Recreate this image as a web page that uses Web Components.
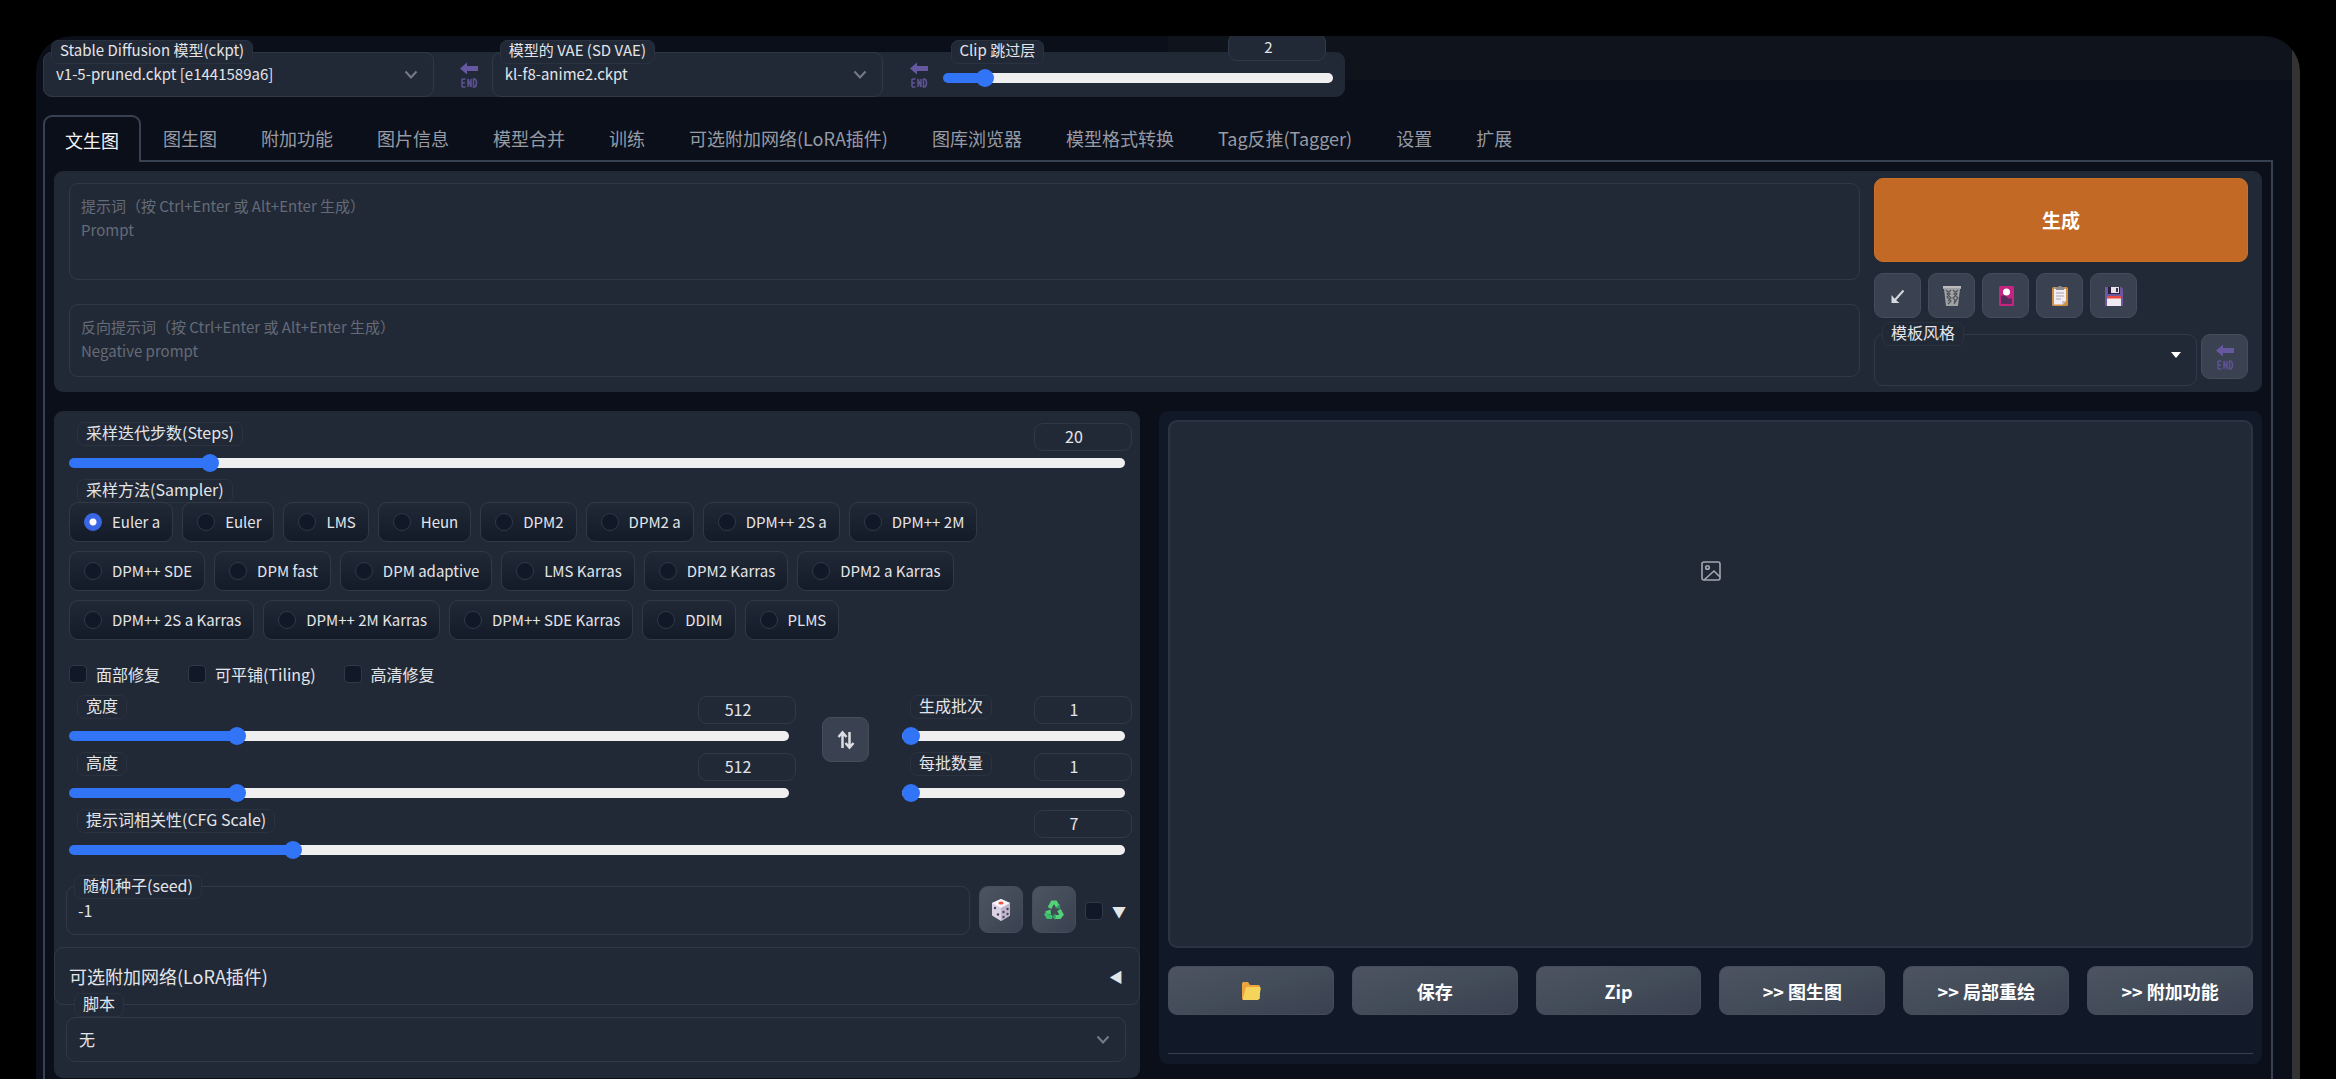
<!DOCTYPE html>
<html lang="zh-CN">
<head>
<meta charset="utf-8">
<title>Stable Diffusion</title>
<style>
body {
    margin: 0;
    background: #000;
    color: #e3e5e9;
    font: 16px/24px "Noto Sans CJK SC", "Noto Sans", sans-serif;
    --window: #0b0f19;
    --panel: #222936;
    --dark: #111827;
    --line: #313947;
    --frame: #374151;
    --blue: #3274f6;
}
</style>
</head>
<body>
<sd-window>
    <sd-quickbar>
        <sd-select label="Stable Diffusion 模型(ckpt)" value="v1-5-pruned.ckpt [e1441589a6]"></sd-select>
        <sd-button kind="bare" icon="end" title="应用"></sd-button>
        <sd-select label="模型的 VAE (SD VAE)" value="kl-f8-anime2.ckpt"></sd-select>
        <sd-button kind="bare" icon="end" title="应用"></sd-button>
        <sd-slider compact label="Clip 跳过层" min="1" max="12" value="2"></sd-slider>
    </sd-quickbar>

    <sd-tabs items="文生图,图生图,附加功能,图片信息,模型合并,训练,可选附加网络(LoRA插件),图库浏览器,模型格式转换,Tag反推(Tagger),设置,扩展">
        <sd-prompt-panel></sd-prompt-panel>
        <sd-columns>
            <sd-settings></sd-settings>
            <sd-output></sd-output>
        </sd-columns>
    </sd-tabs>
</sd-window>

<script>
const ICONS = {
    end: `<svg width="20" height="30" viewBox="0 0 20 30" fill="none"><path d="M1 8.500 8 2.500v3.500h11v5H8v3.500z" fill="#6558a0"/><path d="M3 19v8m0-8h3.500M3 23h3m-3 4h3.500M9 27v-8l3 8v-8M14.500 19v8h1q2-.500 2-4t-2-4z" stroke="#5c5192" stroke-width="1.600"/></svg>`,
    paste: `<svg width="20" height="20" viewBox="0 0 20 20" fill="none" stroke="#d5d8dc" stroke-width="2"><path d="m15.500 4.500-9 10"/><path d="M3.500 9v8h8l-3-2.500L6 12z" fill="#d5d8dc" stroke="none"/></svg>`,
    trash: `<svg width="20" height="20" viewBox="0 0 20 20"><path d="M1 0h18v3h-1l-2 17H4L2 3H1z" fill="#a0a1a3"/><path d="m4 4 4 4-3 3 4 4-3 3m3-14L5 8l4 4-3 3m5-11 4 4-4 4 3 3-2 3m4-14-4 4 4 4-4 4" stroke="#50545b" stroke-width="1.200" fill="none"/><path d="M1 1h18" stroke="#bbb" stroke-width="2"/></svg>`,
    card: `<svg width="20" height="20" viewBox="0 0 20 20"><rect x="3" width="15" height="20" rx="1.500" fill="#c72482"/><path d="M5 10q4-2 6 1t5 1v6H5z" fill="#542f5e"/><circle cx="10.500" cy="6" r="3.500" fill="#fff"/></svg>`,
    clipboard: `<svg width="20" height="20" viewBox="0 0 20 20"><rect x="2" y="1" width="16" height="19" rx="1.500" fill="#cf8f45"/><path d="M4 3h12v12l-3.500 3.500H4z" fill="#f2edf3"/><path d="M12 18.500V15h4z" fill="#c9c2d2"/><path d="M6 1h2.500a1.500 1.500 0 0 1 3 0H14v3H6z" fill="#8c8c91"/><path d="M6 7h8M6 10h8M6 13h5" stroke="#aaa3b2" stroke-width="1.200"/></svg>`,
    save: `<svg width="20" height="20" viewBox="0 0 20 20"><path d="M1 1h16l2 2v17H1z" fill="#6d579f"/><path d="M4 1h12v7H4z" fill="#29203c"/><path d="M7 1h8v6H7z" fill="#e7e2ea"/><path d="M12 2h2v4h-2z" fill="#3b3150"/><path d="M3 11h14v9H3z" fill="#efeaf0"/><path d="M3 10h14v2.500H3z" fill="#e6493f"/></svg>`,
    swap: `<svg width="18" height="20" viewBox="0 0 18 20" fill="none" stroke="#dcdee2" stroke-width="2.500"><path d="M5.500 18V4M1.500 7l4-4.500 4 4.500M12.500 2v14m-4-3 4 4.500 4-4.500"/></svg>`,
    dice: `<svg width="20" height="22" viewBox="0 0 20 22"><path d="m10 0 9 4v12.500L10 22 1 16.500V4z" fill="#d9d2e2"/><path d="m10 0 9 4-9 5-9-5z" fill="#f7f3f8"/><path d="m10 9 9-5v12.500L10 22z" fill="#c0b6cc"/><ellipse cx="10" cy="4" rx="2.600" ry="1.500" fill="#ee5548"/><g fill="#4e4066"><circle cx="4" cy="9" r="1.200"/><circle cx="7" cy="15.500" r="1.200"/><circle cx="12.500" cy="18" r="1.200"/><circle cx="12.500" cy="13" r="1.200"/><circle cx="16.500" cy="10" r="1.200"/><circle cx="16.500" cy="15" r="1.200"/></g></svg>`,
    recycle: `<svg width="20" height="20" viewBox="0 0 20 20" fill="none" stroke-width="4"><path d="m5.500 8 3-5.500h3L14 7" stroke="#54d277"/><path d="m11 8 5 1V4z" fill="#2f9d60"/><path d="m15 10 2.500 4.500L15.500 17H11" stroke="#54d277"/><path d="m11.500 13-4 4 4 3z" fill="#2f9d60"/><path d="M8 17H4l-1.500-2.500L4 12" stroke="#3cbf6b"/><path d="m1 11.500 5.500-2L7 15z" fill="#54d277"/></svg>`,
    folder: `<svg width="20" height="20" viewBox="0 0 20 20"><path d="M1 2.500Q1 1 2.500 1H7l2 3h8.500Q19 4 19 5.500V18H1z" fill="#eea33f"/><path d="M5 6h13.500q1.500 0 1.200 1.500L18 18q-.300 1-1.500 1H1.500z" fill="#f6d35a"/></svg>`,
    image: `<svg width="20" height="20" viewBox="0 0 20 20" fill="none" stroke="#a3a8b1" stroke-width="1.600"><rect x="1" y="1" width="18" height="18" rx="2"/><circle cx="6.500" cy="6.500" r="1.800"/><path d="m3 19 10-9 6 6"/></svg>`,
    chevron: `<svg width="14" height="10" viewBox="0 0 14 10" fill="none" stroke="#757b86" stroke-width="2"><path d="m1.500 1.500 5.500 6 5.500-6"/></svg>`,
    caret: `<svg width="10" height="16" viewBox="0 0 10 16"><path d="M0 0h10L5 6z" fill="#fff"/></svg>`
};

const CHIP = `
.chip {
    box-sizing: border-box;
    height: 24px;
    padding: 0 8px;
    border: 1px solid #2a3240;
    border-radius: 7px;
    background: var(--panel);
    line-height: 18px;
    white-space: nowrap;
}
`;

const BASE = `
*, *::before, *::after { box-sizing: border-box; }
button, input, select, textarea { margin: 0; font: inherit; color: inherit; }
svg { display: block; }
`;

class SdElement extends HTMLElement {
    constructor() {
        super();
        this.attachShadow({mode: "open"});
    }

    connectedCallback() {
        this.shadowRoot.innerHTML = `<style>${BASE}${this.styles()}</style>${this.markup()}`;
        this.ready();
    }

    attr(name) {
        return this.getAttribute(name) || "";
    }

    ready() {}
}

class SdWindow extends SdElement {
    // the 8px strip on the right is the scrollbar gutter
    styles() {
        return `
        :host {
            display: block;
            margin: 36px 36px 0;
            padding: 16px 27px 0 7px;
            overflow: hidden;
            border-radius: 36px 36px 0 0;
            background:
                linear-gradient(90deg, transparent calc(100% - 8px), #333 0),
                linear-gradient(90deg, transparent 50%, #0f131b 50%) 0 0 / 100% 44px no-repeat,
                var(--window);
        }`;
    }
    markup() { return `<slot></slot>`; }
}

class SdQuickbar extends SdElement {
    styles() {
        return `
        :host {
            display: grid;
            grid-template-columns: 1fr 58px 1fr 60px 1fr;
            width: 58.4%;
            height: 45px;
            padding-right: 12px;
            box-sizing: border-box;
            border-radius: 9px;
            background: var(--panel);
            font-size: 15px;
        }`;
    }
    markup() { return `<slot></slot>`; }
}

class SdSelect extends SdElement {
    styles() {
        return `${CHIP}
        :host { display: grid; position: relative; min-width: 0; height: 45px; }
        :host([tall]) { height: 52px; }
        select, svg { grid-area: 1 / 1; }
        select {
            width: 100%;
            padding: 0 12px 2px;
            border: 1px solid var(--line);
            border-radius: 9px;
            background: var(--panel);
            appearance: none;
        }
        svg { place-self: center end; margin-right: 16px; pointer-events: none; }
        .chip { position: absolute; top: -12px; left: 8px; }
        :host([low]) .chip { top: -24px; }`;
    }
    markup() {
        const icon = this.attr("icon") || "chevron";
        return `<select id="s"><option>${this.attr("value")}</option></select>${ICONS[icon]}
        <label class="chip" for="s">${this.attr("label")}</label>`;
    }
}

class SdButton extends SdElement {
    styles() {
        return `
        :host { display: grid; min-width: 0; }
        button {
            display: grid;
            place-items: center;
            padding: 0;
            border: 1px solid #454d5b;
            border-radius: 9px;
            background: #3a4150;
            color: #fff;
            font-size: 18px;
            font-weight: 700;
        }
        :host([kind=bare]) button { padding-left: 12px; border: 0; background: none; }
        :host([kind=primary]) button { border-color: #cb7028; background: #c26a25; font-size: 19px; }
        :host([kind=soft]) button { background: linear-gradient(to bottom right, #4d5361, #434c59 50%, #3a4050); }`;
    }
    markup() {
        const icon = this.attr("icon");
        const name = this.attr("title") ? ` aria-label="${this.attr("title")}"` : "";
        return `<button type="button"${name}>${icon ? ICONS[icon] : "<slot></slot>"}</button>`;
    }
}

class SdSlider extends SdElement {
    styles() {
        return `${CHIP}
        :host { display: block; min-width: 0; height: 57px; }
        .head {
            display: flex;
            justify-content: space-between;
            align-items: flex-start;
            height: 32px;
            margin-right: -7px;
            padding-left: 8px;
        }
        input[type=number] {
            width: 98px;
            height: 28px;
            margin-top: 1px;
            padding: 0 18px 2px 0;
            border: 1px solid var(--line);
            border-radius: 9px;
            background: var(--panel);
            text-align: center;
            appearance: textfield;
        }
        input::-webkit-inner-spin-button { appearance: none; }
        input[type=range] {
            display: block;
            width: 100%;
            height: 18px;
            background: none;
            appearance: none;
        }
        input::-webkit-slider-runnable-track {
            height: 10px;
            border-radius: 5px;
            background: linear-gradient(90deg, var(--blue) var(--fill), #efefef var(--fill));
        }
        input::-webkit-slider-thumb {
            width: 18px;
            height: 18px;
            margin-top: -4px;
            border-radius: 50%;
            background: var(--blue);
            appearance: none;
        }
        :host([compact]) { position: relative; height: 45px; padding-top: 17px; box-sizing: border-box; }
        :host([compact]) .head {
            position: absolute;
            inset: -20px 7px auto 0;
            margin: 0;
        }
        :host([compact]) .chip { align-self: flex-end; }`;
    }
    markup() {
        const range = `min="${this.attr("min")}" max="${this.attr("max")}" value="${this.attr("value")}"`;
        return `<div class="head">
            <label class="chip" for="r">${this.attr("label")}</label>
            <input type="number" aria-label="${this.attr("label")}" ${range}>
        </div>
        <input type="range" id="r" ${range}>`;
    }
    ready() {
        this.range = this.shadowRoot.querySelector("[type=range]");
        this.number = this.shadowRoot.querySelector("[type=number]");
        this.range.addEventListener("input", () => this.update(this.range.value));
        this.number.addEventListener("input", () => this.update(this.number.value));
        this.update(this.attr("value"));
    }
    update(value) {
        const min = Number(this.range.min), max = Number(this.range.max);
        this.range.value = value;
        this.number.value = value;
        this.range.style.setProperty("--fill", (value - min) / (max - min) * 100 + "%");
    }
}

class SdCheck extends SdElement {
    styles() {
        return `
        :host { display: inline-flex; }
        label { display: flex; align-items: center; gap: 9px; }
        input {
            width: 18px;
            height: 18px;
            border: 1px solid var(--line);
            border-radius: 4px;
            background: var(--dark);
            appearance: none;
        }
        input:checked { background: var(--blue); }`;
    }
    markup() { return `<label><input type="checkbox" aria-label="${this.attr("name")}"><slot></slot></label>`; }
}

class SdSamplers extends SdElement {
    styles() {
        return `${CHIP}
        :host { display: block; }
        fieldset { display: flex; flex-wrap: wrap; gap: 9px; margin: 0; padding: 0 24px 0 0; border: 0; }
        legend { margin: 0 0 -1px 8px; }
        label {
            display: flex;
            align-items: center;
            gap: 10px;
            height: 40px;
            padding: 0 12px 0 14px;
            border: 1px solid var(--line);
            border-radius: 9px;
            background: linear-gradient(#222936, #131a28);
            font-size: 15px;
        }
        input {
            width: 18px;
            height: 18px;
            border: 1px solid var(--line);
            border-radius: 50%;
            background: var(--dark);
            appearance: none;
        }
        input:checked { border-color: #3a66e6; background: radial-gradient(#fff 3px, #3a66e6 4px); }`;
    }
    markup() {
        const items = this.attr("items").split(",").map((name, i) =>
            `<label><input type="radio" name="sampler"${i == 0 ? " checked" : ""}>${name}</label>`);
        return `<fieldset><legend class="chip">${this.attr("label")}</legend>${items.join("")}</fieldset>`;
    }
}

class SdTabs extends SdElement {
    styles() {
        return `
        :host { display: block; margin-top: 18px; }
        nav { display: flex; height: 47px; }
        nav::after { content: ""; flex: 1; border-bottom: 2px solid var(--frame); }
        button {
            padding: 0 22px;
            border: 0;
            border-bottom: 2px solid var(--frame);
            background: none;
            color: #969ba5;
            font-size: 18px;
            white-space: nowrap;
        }
        button[aria-selected=true] {
            padding: 0 20px;
            border: 2px solid var(--frame);
            border-bottom: 0;
            border-radius: 9px 9px 0 0;
            color: #f3f4f6;
        }
        .body { padding: 9px 9px 1px; border: solid var(--frame); border-width: 0 2px; }`;
    }
    markup() {
        const tabs = this.attr("items").split(",").map((name, i) =>
            `<button type="button" role="tab" aria-selected="${i == 0}">${name}</button>`);
        return `<nav role="tablist">${tabs.join("")}</nav><div class="body"><slot></slot></div>`;
    }
}

class SdPromptPanel extends SdElement {
    styles() {
        return `
        :host {
            display: grid;
            grid-template-columns: minmax(0, 1791fr) minmax(0, 374fr);
            gap: 14px;
            padding: 7px 14px 6px 15px;
            border-radius: 9px;
            background: var(--panel);
        }
        .texts { display: flex; flex-direction: column; gap: 24px; padding-top: 5px; }
        textarea {
            display: block;
            width: 100%;
            height: 97px;
            padding: 10px 11px;
            border: 1px solid var(--line);
            border-radius: 9px;
            background: none;
            font-size: 15px;
            resize: none;
        }
        textarea.negative { height: 73px; }
        textarea::placeholder { color: #646b78; }
        .side > sd-button { height: 84px; }
        .tools { display: flex; gap: 7px; margin: 11px 0 16px; }
        .tools sd-button, .style sd-button { width: 47px; height: 45px; }
        .style { display: flex; gap: 4px; }
        .style sd-select { flex: 1; }`;
    }
    markup() {
        return `<div class="texts">
            <textarea aria-label="提示词" placeholder="提示词（按 Ctrl+Enter 或 Alt+Enter 生成）&#10;Prompt"></textarea>
            <textarea class="negative" aria-label="反向提示词" placeholder="反向提示词（按 Ctrl+Enter 或 Alt+Enter 生成）&#10;Negative prompt"></textarea>
        </div>
        <div class="side">
            <sd-button kind="primary">生成</sd-button>
            <div class="tools">
                <sd-button icon="paste" title="读取参数"></sd-button>
                <sd-button icon="trash" title="清空"></sd-button>
                <sd-button icon="card" title="附加网络"></sd-button>
                <sd-button icon="clipboard" title="粘贴"></sd-button>
                <sd-button icon="save" title="保存风格"></sd-button>
            </div>
            <div class="style">
                <sd-select tall icon="caret" label="模板风格"></sd-select>
                <sd-button icon="end" title="应用"></sd-button>
            </div>
        </div>`;
    }
}

class SdColumns extends SdElement {
    styles() {
        return `
        :host {
            display: grid;
            grid-template-columns: minmax(0, 1086fr) minmax(0, 1103fr);
            align-items: start;
            gap: 19px;
            margin-top: 19px;
        }`;
    }
    markup() { return `<slot></slot>`; }
}

class SdSettings extends SdElement {
    styles() {
        return `${CHIP}
        :host { display: block; padding: 11px 0 16px; border-radius: 9px; background: var(--panel); }
        .inset { padding: 0 15px; }
        .checks { display: flex; gap: 28px; margin: 22px 0 9px; }
        .size { display: grid; grid-template-columns: 720fr 47px 223fr; gap: 33px; }
        .size sd-button { height: 45px; margin-top: 22px; }
        .seed { display: flex; gap: 9px; margin: 20px 14px 12px 12px; }
        .seed sd-button { width: 44px; height: 47px; }
        .seed sd-check { align-self: center; }
        .seed span, summary span { align-self: center; font-size: 14px; }
        .field { position: relative; flex: 1; }
        .field input {
            display: block;
            width: 100%;
            height: 49px;
            padding: 0 11px 2px;
            border: 1px solid var(--line);
            border-radius: 9px;
            background: none;
        }
        .field .chip { position: absolute; top: -11px; left: 8px; }
        details { border: 1px solid var(--line); border-radius: 9px; }
        summary {
            display: flex;
            justify-content: space-between;
            align-items: center;
            height: 56px;
            padding: 0 16px 0 14px;
            font-size: 18px;
            list-style: none;
        }
        .script { margin: 12px 14px 0 12px; }`;
    }
    markup() {
        return `<div class="inset">
            <sd-slider label="采样迭代步数(Steps)" min="1" max="150" value="20"></sd-slider>
            <sd-samplers label="采样方法(Sampler)" items="Euler a,Euler,LMS,Heun,DPM2,DPM2 a,DPM++ 2S a,DPM++ 2M,DPM++ SDE,DPM fast,DPM adaptive,LMS Karras,DPM2 Karras,DPM2 a Karras,DPM++ 2S a Karras,DPM++ 2M Karras,DPM++ SDE Karras,DDIM,PLMS"></sd-samplers>
            <div class="checks">
                <sd-check name="面部修复">面部修复</sd-check>
                <sd-check name="可平铺(Tiling)">可平铺(Tiling)</sd-check>
                <sd-check name="高清修复">高清修复</sd-check>
            </div>
            <div class="size">
                <div>
                    <sd-slider label="宽度" min="64" max="2048" value="512"></sd-slider>
                    <sd-slider label="高度" min="64" max="2048" value="512"></sd-slider>
                </div>
                <sd-button icon="swap" title="交换宽高"></sd-button>
                <div>
                    <sd-slider label="生成批次" min="1" max="100" value="1"></sd-slider>
                    <sd-slider label="每批数量" min="1" max="8" value="1"></sd-slider>
                </div>
            </div>
            <sd-slider label="提示词相关性(CFG Scale)" min="1" max="30" value="7"></sd-slider>
        </div>
        <div class="seed">
            <div class="field">
                <input id="seed" type="text" value="-1">
                <label class="chip" for="seed">随机种子(seed)</label>
            </div>
            <sd-button kind="soft" icon="dice" title="随机"></sd-button>
            <sd-button kind="soft" icon="recycle" title="重用种子"></sd-button>
            <sd-check name="更多"></sd-check>
            <span>▼</span>
        </div>
        <details><summary>可选附加网络(LoRA插件)<span>◀</span></summary></details>
        <sd-select class="script" low label="脚本" value="无"></sd-select>`;
    }
}

class SdOutput extends SdElement {
    styles() {
        return `
        :host { display: block; padding: 9px 9px 10px; border-radius: 9px; background: var(--dark); }
        .gallery {
            display: grid;
            justify-items: center;
            align-items: start;
            height: 528px;
            padding-top: 139px;
            border: 2px solid #2c3441;
            border-radius: 9px;
            background: var(--panel);
        }
        .actions { display: grid; grid-template-columns: repeat(6, 1fr); gap: 18px; margin: 18px 0 38px; }
        .actions sd-button { height: 49px; }
        hr { margin: 0; border: 0; border-top: 1px solid var(--frame); }`;
    }
    markup() {
        return `<div class="gallery">${ICONS.image}</div>
        <div class="actions">
            <sd-button kind="soft" icon="folder" title="打开文件夹"></sd-button>
            <sd-button kind="soft">保存</sd-button>
            <sd-button kind="soft">Zip</sd-button>
            <sd-button kind="soft">&gt;&gt; 图生图</sd-button>
            <sd-button kind="soft">&gt;&gt; 局部重绘</sd-button>
            <sd-button kind="soft">&gt;&gt; 附加功能</sd-button>
        </div>
        <hr>`;
    }
}

customElements.define("sd-window", SdWindow);
customElements.define("sd-quickbar", SdQuickbar);
customElements.define("sd-select", SdSelect);
customElements.define("sd-button", SdButton);
customElements.define("sd-slider", SdSlider);
customElements.define("sd-check", SdCheck);
customElements.define("sd-samplers", SdSamplers);
customElements.define("sd-tabs", SdTabs);
customElements.define("sd-prompt-panel", SdPromptPanel);
customElements.define("sd-columns", SdColumns);
customElements.define("sd-settings", SdSettings);
customElements.define("sd-output", SdOutput);
</script>
</body>
</html>
